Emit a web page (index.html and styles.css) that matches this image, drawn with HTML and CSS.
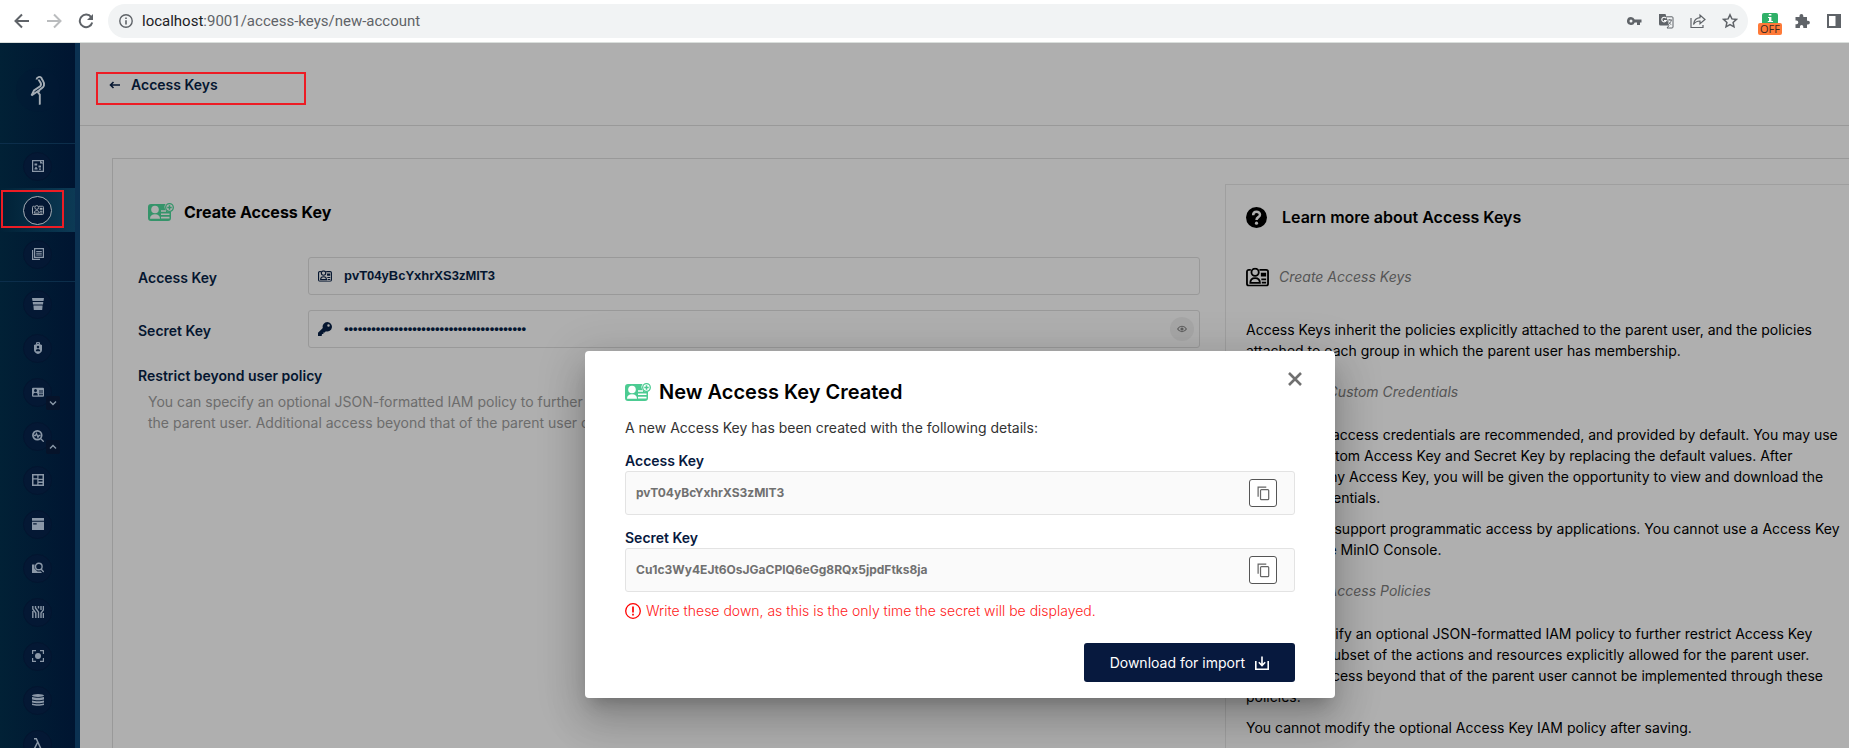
FILE: index.html
```html
<!DOCTYPE html>
<html lang="en">
<head>
<meta charset="utf-8">
<title>MinIO Console</title>
<link rel="stylesheet" href="styles.css">
</head>
<body>
<svg class="defs" aria-hidden="true">
  <symbol id="badge" viewBox="0 0 24 20">
    <path d="M5 2.500H3a2 2 0 0 0-2 2V17a2 2 0 0 0 2 2h18a2 2 0 0 0 2-2V4.500a2 2 0 0 0-2-2h-7" fill="none" stroke="currentColor" stroke-width="1.900"/>
    <circle cx="9.500" cy="5" r="3.800" fill="none" stroke="currentColor" stroke-width="1.900"/>
    <path d="M4.500 16.200c0-3.500 1.800-5 5-5s5 1.500 5 5z" fill="none" stroke="currentColor" stroke-width="1.900"/>
    <path d="M15.500 5.500H21v4h-5.500zM16 11.500h5v1.800h-5zM16.500 15h4.500v1.800h-4.500z" fill="currentColor"/>
  </symbol>
  <symbol id="card-add" viewBox="0 0 26 18">
    <path d="M3 1h14.600a4.800 4.800 0 0 0 5.400 7.500V15a3 3 0 0 1-3 3H3a3 3 0 0 1-3-3V4a3 3 0 0 1 3-3z" fill="currentColor"/>
    <circle class="hole" cx="7" cy="6.500" r="3.800"/>
    <path class="hole" d="M2 15.700c0-3 1.800-4.500 5-4.500s5 1.500 5 4.500zM13 7.300h5v1.500h-5zM13 10.500h8.500v1.600H13zM13 13.800h8.500v1.600H13z"/>
    <circle cx="21.500" cy="4.500" r="3.800" fill="none" stroke="currentColor" stroke-width="1.300"/>
    <path d="M21.500 2.300v4.400M19.300 4.500h4.400" stroke="currentColor" stroke-width="1.500"/>
  </symbol>
  <symbol id="copy" viewBox="0 0 14 16">
    <path d="M1.200 11.500V1.200H10" fill="none" stroke="currentColor" stroke-width="1.300"/>
    <rect x="3.800" y="3.800" width="8.800" height="10.800" rx="1" fill="none" stroke="currentColor" stroke-width="1.300"/>
  </symbol>
</svg>

<header class="browser">
  <div class="nav-buttons">
    <button aria-label="Back"><svg viewBox="0 0 16 16"><path d="M15 8H2M8 1.500 1.500 8 8 14.500" fill="none" stroke="#5f6368" stroke-width="2"/></svg></button>
    <button aria-label="Forward"><svg viewBox="0 0 16 16"><path d="M1 8h13M8 1.500 14.500 8 8 14.500" fill="none" stroke="#babcbe" stroke-width="2"/></svg></button>
    <button aria-label="Reload"><svg viewBox="0 0 16 16"><path d="M13.200 4.200A6.300 6.300 0 1 0 14.200 9.500" fill="none" stroke="#5f6368" stroke-width="2"/><path d="M15 1v6H9z" fill="#5f6368"/></svg></button>
  </div>
  <div class="address">
    <svg class="info" viewBox="0 0 14 14"><circle cx="7" cy="7" r="6.200" fill="none" stroke="#5f6368" stroke-width="1.400"/><path d="M6.200 6.200h1.600V10.500H6.200zM6.200 3.400h1.600V5H6.200z" fill="#5f6368"/></svg>
    <span class="url"><b>localhost</b>:9001/access-keys/new-account</span>
    <span class="address-icons">
      <svg viewBox="0 0 16 16"><path d="M5 4a4 4 0 1 0 3.700 5.500H11V12h3V9.500h1.500v-3H8.700A4 4 0 0 0 5 4zm0 2.500a1.500 1.500 0 1 1 0 3 1.500 1.500 0 0 1 0-3z" fill="#5f6368" fill-rule="evenodd"/></svg>
      <svg viewBox="0 0 16 16"><path d="M1 1h6.500l3.500 11.500H2.500A1.500 1.500 0 0 1 1 11z" fill="#5f6368"/><path d="M8.300 3.800H14a1 1 0 0 1 1 1V14a1 1 0 0 1-1 1H9l2-2.500" fill="none" stroke="#5f6368"/><path d="M8 5.200A2.300 2.300 0 1 0 8.200 7.500H6" fill="none" stroke="#fff" stroke-width="1.100"/><path d="M9.500 7h4.500M11.800 6v1M13.300 7c-.3 2-1.500 3.500-3 4.500M10.500 8.500c.7 1.500 1.500 2.500 2.800 3" fill="none" stroke="#5f6368" stroke-width=".9"/></svg>
      <svg viewBox="0 0 16 16"><path d="M1 5v9.500h12V12" fill="none" stroke="#5f6368" stroke-width="1.200"/><path d="M3.500 11.500C4 7.500 6 5 10 4.700V2l5 4.500-5 4.300V8C7 8 5 9 3.500 11.500z" fill="none" stroke="#5f6368" stroke-width="1.200"/></svg>
      <svg viewBox="0 0 16 16"><path d="m8 1.800 1.900 4.100 4.500.5-3.300 3 .9 4.400L8 11.600l-4 2.200.9-4.400-3.300-3 4.500-.5z" fill="none" stroke="#5f6368" stroke-width="1.500"/></svg>
    </span>
  </div>
  <div class="extensions">
    <span class="ext"><span class="ext-top"><svg viewBox="0 0 16 9"><path d="M6.800 1h2.600v1.600H6.800zM6 4h3.400v4H11v1H5.800V8H7V5H6z" fill="#fff"/></svg></span><span class="ext-off">OFF</span></span>
    <svg viewBox="0 0 16 16"><path d="M1.500 4h4V2.800a1.900 1.900 0 0 1 3.800 0V4H13v3.700h1a1.900 1.900 0 0 1 0 3.800h-1V15H9.300v-1.200a1.700 1.700 0 0 0-3.400 0V15H1.500v-3.800h1a1.800 1.800 0 0 0 0-3.600h-1z" fill="#5f6368"/></svg>
    <svg viewBox="0 0 16 16"><path d="M1 1h14v14H1zm2 2v10h6.500V3z" fill="#5f6368" fill-rule="evenodd"/></svg>
  </div>
</header>

<div class="app">
  <nav class="sidebar" aria-label="Main">
    <div class="logo"><svg viewBox="0 0 16 30"><path d="M6.500 4.500A2.800 2.800 0 0 1 11.500 3c.7 2.700 3.400 4 2.500 7.500-.6 2.500-2.500 2.500-4.500 4.500L1.500 20.500 4 15.500l6.500-4.500C12.500 8.500 9.500 7 8.500 4.500M9.500 15.500 8 17.500l1.800 2V30" fill="none" stroke="#a5adb5" stroke-width="1.900"/></svg></div>
    <ul class="group">
      <li><a href="#" aria-label="Object Browser"><svg viewBox="0 0 12 12"><path d="M.6.600h10.800v10.800H.6z" fill="none" stroke="currentColor" stroke-width="1.200"/><path d="M2.500 3.500h2.700v2H2.500zM6.500 5.500H9v2H6.500zM2.500 8.500 4 6.500 5.500 8.500v1h-3zM7 8.500h2v1.200H7zM8 .5l3.500 3H8z" fill="currentColor"/></svg></a></li>
      <li class="active"><a href="#" aria-label="Access Keys"><svg viewBox="0 0 24 20"><use href="#badge"/></svg></a></li>
      <li><a href="#" aria-label="Documentation"><svg viewBox="0 0 12 12"><path d="M2.600.6h8.800v8.800H2.600zM.6 2v9.400H8" fill="none" stroke="currentColor" stroke-width="1.200"/><path d="M4.200 3h5.600v1H4.200zM4.200 4.700h5.600v1H4.200zM4.200 6.400h5.600v1H4.200z" fill="currentColor"/></svg></a></li>
    </ul>
    <ul class="group">
      <li><a href="#" aria-label="Buckets"><svg viewBox="0 0 12 12"><path d="M0 0h12l-.5 3H.5z" fill="currentColor"/><path d="M.7 4h10.600L11 6.500H1zM1.400 7.500h9.200L10.200 12H1.800z" fill="currentColor"/></svg></a></li>
      <li><a href="#" aria-label="Policies"><svg viewBox="0 0 12 12"><path d="M4.500 2V.6h3V2" fill="none" stroke="currentColor"/><path d="M6 1.500 10 3v5c0 2-2 3.500-4 4-2-.5-4-2-4-4V3zM6 3.800a1.300 1.300 0 1 0 0 2.600 1.300 1.300 0 0 0 0-2.600zM3.800 9.200h4.400c0-1.500-.8-2.200-2.200-2.200s-2.200.7-2.200 2.200z" fill="currentColor" fill-rule="evenodd"/></svg></a></li>
      <li><a href="#" aria-label="Identity"><svg viewBox="0 0 12 12"><path d="M1 1.800h10a1 1 0 0 1 1 1v7a1 1 0 0 1-1 1H1a1 1 0 0 1-1-1v-7a1 1 0 0 1 1-1zM3.500 3a1.500 1.500 0 1 0 0 3 1.500 1.500 0 0 0 0-3zM1.200 9.500h4.600c0-2-1-2.700-2.300-2.700S1.200 7.500 1.200 9.500zM7 4.500v.9h4v-.9zM7 6.400v.9h4v-.9zM7 8.300v.9h4v-.9z" fill="currentColor" fill-rule="evenodd"/></svg></a><svg class="chevron" viewBox="0 0 14 14"><path d="m4 5.500 3 3 3-3" fill="none" stroke="currentColor" stroke-width="1.400"/></svg></li>
      <li><a href="#" aria-label="Monitoring"><svg viewBox="0 0 12 12"><circle cx="5.300" cy="5.300" r="4.400" fill="none" stroke="currentColor" stroke-width="1.700"/><path d="M2 5.500h1.500l1-2L6 7.200l1-1.700h1.500M8.500 8.500l3.200 3.200" fill="none" stroke="currentColor" stroke-width="1.300"/></svg></a><svg class="chevron" viewBox="0 0 14 14"><path d="m4 8.500 3-3 3 3" fill="none" stroke="currentColor" stroke-width="1.400"/></svg></li>
      <li><a href="#" aria-label="Metrics"><svg viewBox="0 0 12 12"><path d="M0 0h12v12H0zm1.500 1.500v2.800h3.800V1.500zm5 0v3.300h4V1.500zm-5 4v5h3.800v-5zm5 .6v1.500h4V6.100zm0 2.800v1.600h4V8.900z" fill="currentColor" fill-rule="evenodd"/></svg></a></li>
      <li><a href="#" aria-label="Logs"><svg viewBox="0 0 12 12"><path d="M0 0h12v2.700H0zM0 3.800h12V12H0zm1.200 1.500v1.200h3.500V5.300z" fill="currentColor" fill-rule="evenodd"/></svg></a></li>
      <li><a href="#" aria-label="Audit"><svg viewBox="0 0 12 12"><circle cx="6.800" cy="4.500" r="3.300" fill="none" stroke="currentColor" stroke-width="1.400"/><path d="M9 7l2.800 3" stroke="currentColor" stroke-width="1.400"/><path d="M0 2.500h2.500v4l3 3h3.300L10 11H0z" fill="currentColor"/></svg></a></li>
      <li><a href="#" aria-label="Trace"><svg viewBox="0 0 12 12"><path d="M.8 0v3l3 4v5M.8 5v7M3.500 0v2l3 4v6M6.500 0v2.500M9 0v4M11.400 0v4L9 7v5M11.400 7v5" fill="none" stroke="currentColor" stroke-width="1.400"/></svg></a></li>
      <li><a href="#" aria-label="Drives"><svg viewBox="0 0 12 12"><path d="M.6 4V.6H4M8 .6h3.400V4M11.400 8v3.400H8M4 11.400H.6V8" fill="none" stroke="currentColor" stroke-width="1.200"/><circle cx="6" cy="6" r="3" fill="currentColor"/></svg></a></li>
      <li><a href="#" aria-label="Tiers"><svg viewBox="0 0 12 12"><ellipse cx="6" cy="1.500" rx="6" ry="1.400" fill="currentColor"/><path d="M0 3c3 1 9 1 12 0v2.500c-3 1-9 1-12 0zM0 6.500c3 1 9 1 12 0V8.500c-3 1-9 1-12 0zM0 9.500c3 1 9 1 12 0V11c-3 1-9 1-12 0z" fill="currentColor"/></svg></a></li>
      <li><a href="#" aria-label="Events"><svg viewBox="0 0 12 12"><path d="M2 .8h2.300L9 11h1.800M5.500 4.500 2 11.500" fill="none" stroke="currentColor" stroke-width="1.500"/></svg></a></li>
    </ul>
  </nav>

  <main class="page">
    <div class="page-header"><a href="#" class="back"><svg viewBox="0 0 11 8"><path d="M11 4H1.500M4.500 1l-3 3 3 3" fill="none" stroke="currentColor" stroke-width="1.600"/></svg>Access Keys</a></div>
    <div class="card">
      <form class="create">
        <h2 class="form-title"><svg class="green" viewBox="0 0 26 18"><use href="#card-add"/></svg>Create Access Key</h2>
        <div class="row">
          <label for="ak">Access Key</label>
          <div class="field"><svg viewBox="0 0 24 20"><use href="#badge"/></svg><input id="ak" type="text" value="pvT04yBcYxhrXS3zMlT3"></div>
        </div>
        <div class="row">
          <label for="sk">Secret Key</label>
          <div class="field"><svg viewBox="0 0 14 14"><path d="M9.300 0a4.700 4.700 0 1 1-1.400 9.200L6.700 10.400H5.400v1.500H3.900V13.400L3.300 14H0v-3.200L4.800 6A4.700 4.700 0 0 1 9.300 0zM10.500 2.300a1.200 1.200 0 1 0 0 2.500 1.200 1.200 0 0 0 0-2.500z" fill="currentColor" fill-rule="evenodd"/></svg><input id="sk" type="password" value="Cu1c3Wy4EJt6OsJGaCPlQ6eGg8RQx5jpdFtks8ja"><button type="button" class="eye" aria-label="Show"><svg viewBox="0 0 12 8"><path d="M.7 4C3.500-.3 8.500-.3 11.300 4 8.500 8.300 3.500 8.300.7 4z" fill="none" stroke="currentColor" stroke-width="1.300"/><circle cx="6" cy="4" r="1.900" fill="currentColor"/></svg></button></div>
        </div>
        <h3 class="policy-title">Restrict beyond user policy</h3>
        <p class="policy-text">You can specify an optional JSON-formatted IAM policy to further restrict Access Key access to a subset of the actions and resources explicitly allowed for the parent user. Additional access beyond that of the parent user cannot be implemented through these policies.</p>
      </form>
      <aside class="help">
        <h2><svg viewBox="0 0 20 20"><circle cx="10" cy="10" r="10" fill="#000"/><path d="M6.800 7.800C6.800 3.400 13.300 3.700 13.300 7.300 13.300 9.800 10 9.500 10 12.300" fill="none" stroke="#afafaf" stroke-width="2.400"/><circle cx="10" cy="15.400" r="1.500" fill="#afafaf"/></svg>Learn more about Access Keys</h2>
        <h3><svg viewBox="0 0 24 20"><use href="#badge"/></svg>Create Access Keys</h3>
        <p>Access Keys inherit the policies explicitly attached to the parent user, and the policies attached to each group in which the parent user has membership.</p>
        <h3><svg viewBox="0 0 24 20"><use href="#badge"/></svg>Assign Custom Credentials</h3>
        <p>Randomized access credentials are recommended, and provided by default. You may use your own custom Access Key and Secret Key by replacing the default values. After creation of any Access Key, you will be given the opportunity to view and download the account credentials.</p>
        <p>Access Keys support programmatic access by applications. You cannot use a Access Key to log into the MinIO Console.</p>
        <h3><svg viewBox="0 0 24 20"><use href="#badge"/></svg>Assign Access Policies</h3>
        <p>You can specify an optional JSON-formatted IAM policy to further restrict Access Key access to a subset of the actions and resources explicitly allowed for the parent user. Additional access beyond that of the parent user cannot be implemented through these policies.</p>
        <p>You cannot modify the optional Access Key IAM policy after saving.</p>
      </aside>
    </div>
  </main>
</div>

<div class="mark mark-title"></div>
<div class="mark mark-menu"></div>

<section class="modal" role="dialog" aria-labelledby="dlg">
  <button class="close" aria-label="Close"><svg viewBox="0 0 14 14"><path d="m1 1 12 12M13 1 1 13" stroke="#707070" stroke-width="2.600"/></svg></button>
  <h1 id="dlg"><svg class="green" viewBox="0 0 26 18"><use href="#card-add"/></svg>New Access Key Created</h1>
  <p class="intro">A new Access Key has been created with the following details:</p>
  <div class="cred">
    <h4>Access Key</h4>
    <div class="cred-box"><span>pvT04yBcYxhrXS3zMlT3</span><button aria-label="Copy Access Key"><svg viewBox="0 0 14 16"><use href="#copy"/></svg></button></div>
  </div>
  <div class="cred">
    <h4>Secret Key</h4>
    <div class="cred-box"><span>Cu1c3Wy4EJt6OsJGaCPlQ6eGg8RQx5jpdFtks8ja</span><button aria-label="Copy Secret Key"><svg viewBox="0 0 14 16"><use href="#copy"/></svg></button></div>
  </div>
  <p class="warning"><svg viewBox="0 0 16 16"><circle cx="8" cy="8" r="7.300" fill="none" stroke="#f00" stroke-width="1.300"/><path d="M8 3.500V9.500M8 10.800v1.700" stroke="#f00" stroke-width="1.700"/></svg>Write these down, as this is the only time the secret will be displayed.</p>
  <div class="actions"><button class="download">Download for import<svg viewBox="0 0 14 14"><path d="M.8 5v8.200h12.400V5M7 .5V9M3.800 6.300 7 9.500l3.200-3.200" fill="none" stroke="#fff" stroke-width="1.600"/></svg></button></div>
</section>
</body>
</html>
```
FILE: styles.css
```css
* { box-sizing: border-box; }
body {
  --hole: #afafaf;
  margin: 0;
  height: 100vh;
  display: flex;
  flex-direction: column;
  overflow: hidden;
  position: relative;
  background: #afafaf;
  color: #000;
  font: 14px/21px Inter, "Liberation Sans", sans-serif;
}
h1, h2, h3, h4, p, ul { margin: 0; padding: 0; }
ul { list-style: none; }
button { padding: 0; border: 0; background: none; font: inherit; }
svg { display: block; flex: none; }
.defs { position: absolute; width: 0; height: 0; }
.hole { fill: var(--hole); }
.green { width: 26px; height: 18px; color: #35946a; }

/* browser bar */
.browser {
  flex: none;
  display: flex;
  align-items: center;
  height: 43px;
  background: #fff;
  border-bottom: 1px solid #dadfdc;
}
.nav-buttons { display: flex; gap: 16px; padding: 0 14px; }
.nav-buttons svg { width: 16px; height: 16px; }
.address {
  flex: 1;
  display: flex;
  align-items: center;
  height: 34px;
  padding: 0 10px 0 11px;
  border-radius: 17px;
  background: #f1f3f4;
}
.info { width: 14px; height: 14px; }
.url { flex: 1; margin-left: 9px; font: 15px/20px Roboto, sans-serif; color: #5f6368; }
.url b { font-weight: 400; color: #202124; }
.address-icons { display: flex; gap: 16px; }
.address-icons svg { width: 16px; height: 16px; }
.extensions { display: flex; align-items: center; gap: 16px; padding: 0 7px 0 10px; }
.extensions > svg { width: 16px; height: 16px; }
.extensions .ext { margin-right: -4px; }
.ext { display: flex; flex-direction: column; align-items: center; width: 24px; padding-top: 5px; }
.ext-top { width: 16px; height: 10px; border-radius: 2px 2px 0 0; background: #2fb068; }
.ext-off {
  width: 24px;
  border-radius: 2px;
  background: #ff7a38;
  color: #3c2a20;
  font: 11px/12px "Open Sans", sans-serif;
  text-align: center;
}

/* sidebar */
.app { flex: 1; min-height: 0; display: flex; overflow: hidden; }
.sidebar {
  flex: none;
  width: 80px;
  overflow: hidden;
  border-right: 5px solid #0b3151;
  background: linear-gradient(90deg, #012136, #001531);
}
.logo {
  display: flex;
  justify-content: center;
  height: 100px;
  padding-top: 25px;
}
.logo svg {
  width: 44px;
  height: 44px;
  padding: 7px;
  border-radius: 50%;
  background: #03183466;
}
.group { padding-bottom: 5px; border-top: 1px solid #0c2e4b; }
.group li {
  display: flex;
  align-items: center;
  justify-content: center;
  height: 44px;
  position: relative;
}
.group a {
  display: grid;
  place-items: center;
  width: 29px;
  height: 29px;
  border: 1px solid #03152f;
  border-radius: 50%;
  background: #041834;
  color: #8b98a8;
}
.group a svg { width: 12px; height: 12px; }
.group .active { background: linear-gradient(90deg, #012136, #0c3a55); }
.group .active a { border-color: #a5adb5; color: #a5adb5; }
.chevron {
  position: absolute;
  right: 15px;
  bottom: 4px;
  width: 14px;
  height: 14px;
  border-radius: 2px;
  background: #06132a;
  color: #8b98a8;
}

/* page */
.page { flex: 1; min-width: 0; display: flex; flex-direction: column; }
.page-header {
  flex: none;
  display: flex;
  height: 83px;
  padding: 31px 29px;
  border-bottom: 1px solid #999;
}
.back {
  display: flex;
  align-items: center;
  gap: 11px;
  height: 21px;
  color: #051630;
  font-weight: 600;
  text-decoration: none;
}
.back svg { width: 11px; height: 8px; }
.card {
  flex: 1;
  display: flex;
  gap: 25px;
  margin: 32px 0 0 32px;
  padding: 25px 0 0 25px;
  border: 1px solid #999;
  border-width: 1px 0 0 1px;
}
.create { flex: 1; min-width: 0; padding-top: 16px; }
.form-title {
  display: flex;
  align-items: center;
  gap: 10px;
  padding-left: 10px;
  margin-bottom: 33px;
  font: 700 16px/24px Inter, sans-serif;
}
.row { display: flex; margin-bottom: 15px; height: 38px; }
.row label { width: 170px; padding-top: 10px; font-weight: 600; color: #051630; }
.field {
  flex: 1;
  display: flex;
  align-items: center;
  gap: 12px;
  padding: 0 5px 0 9px;
  border: 1px solid #999;
  border-radius: 3px;
  color: #051630;
}
.field > svg { width: 14px; height: 14px; }
.field input {
  flex: 1;
  padding: 0;
  border: 0;
  outline: 0;
  background: none;
  color: #051630;
  font: 600 13px/20px "Liberation Sans", Arial, sans-serif;
}
.eye {
  display: grid;
  place-items: center;
  width: 24px;
  height: 24px;
  border-radius: 50%;
  background: #a6a6a6;
  color: #5c5c5c;
}
.eye svg { width: 10px; height: 8px; }
.policy-title { margin: 17px 0 5px; font: 600 14px/21px Inter, sans-serif; color: #051630; }
.policy-text { padding: 0 10px; color: #6c6c6c; }

.help {
  flex: none;
  width: 624px;
  padding: 20px 8px 0 20px;
  border: 1px solid #9f9f9f;
  border-width: 1px 0 0 1px;
}
.help h2 {
  display: flex;
  align-items: center;
  gap: 15px;
  margin-bottom: 37px;
  font: 600 16px/24px Inter, sans-serif;
}
.help h2 svg { width: 21px; height: 21px; }
.help h3 {
  display: flex;
  align-items: center;
  gap: 10px;
  margin: 20px 0 22px;
  font-size: 14px;
  font-weight: 400;
  line-height: 21px;
  font-style: italic;
  color: #555;
}
.help h2 + h3 { margin-bottom: 32px; }
.help h3 svg { width: 23px; height: 20px; color: #000; }
.help p { margin-bottom: 10px; }

/* annotation frames */
.mark { position: absolute; border: 2px solid #ed1c24; }
.mark-title { left: 96px; top: 72px; width: 210px; height: 33px; }
.mark-menu { left: 1px; top: 190px; width: 63px; height: 38px; }

/* dialog */
.modal {
  --hole: #fff;
  position: absolute;
  left: 585px;
  top: 351px;
  width: 750px;
  padding: 26px 40px 16px;
  border-radius: 4px;
  background: #fff;
  box-shadow: 0 11px 15px -7px #0003, 0 24px 38px 3px #00000024, 0 9px 46px 8px #0000001f;
}
.modal .green { color: #4ccb92; }
.close { position: absolute; right: 33px; top: 21px; }
.close svg { width: 14px; height: 14px; }
.modal h1 { display: flex; align-items: center; gap: 8px; font: 600 20px/30px Inter, sans-serif; }
.intro { margin: 10px 0 12px; color: #333; }
.cred { margin-bottom: 12px; }
.cred h4 { font: 600 14px/21px Inter, sans-serif; color: #07193e; }
.cred-box {
  display: flex;
  align-items: center;
  justify-content: space-between;
  height: 44px;
  padding: 0 17px 0 10px;
  border: 1px solid #e3e3e3;
  border-radius: 3px;
  background: #fafafa;
  color: #707070;
  font-size: 12px;
  line-height: 20px;
  font-weight: 700;
}
.cred-box button {
  display: grid;
  place-items: center;
  width: 28px;
  height: 28px;
  border: 1px solid #555;
  border-radius: 3px;
  background: #fff;
  color: #666;
}
.cred-box button svg { width: 13px; height: 15px; }
.cred + .warning { margin-top: -4px; }
.warning { display: flex; align-items: center; gap: 5px; margin-bottom: 22px; color: #ff1a1a; font-weight: 300; }
.warning svg { width: 16px; height: 16px; }
.actions { display: flex; justify-content: flex-end; }
.download {
  display: flex;
  align-items: center;
  gap: 10px;
  height: 39px;
  padding: 0 26px;
  border-radius: 3px;
  background: #07193e;
  color: #fff;
}
.download svg { width: 14px; height: 14px; }
```
